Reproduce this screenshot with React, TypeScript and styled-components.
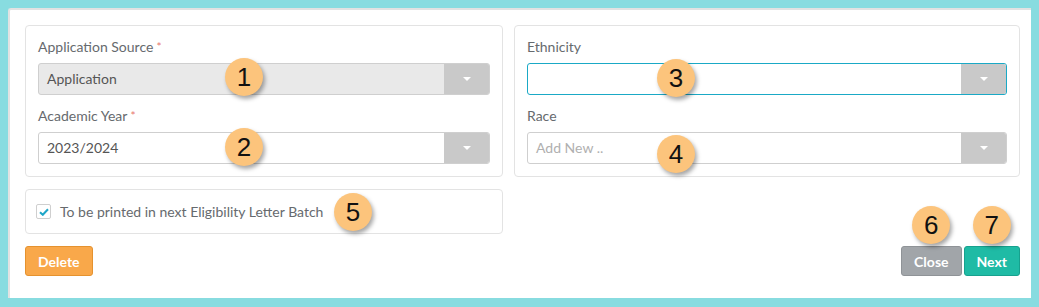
import React from 'react';
import styled, { createGlobalStyle } from 'styled-components';

const GlobalStyle = createGlobalStyle`
  * { box-sizing: border-box; }
  body {
    margin: 0;
    background: #88dce0;
    font-family: Lato, "Open Sans", Arial, sans-serif;
  }
`;

const Frame = styled.div`
  width: 1039px;
  height: 307px;
  padding: 8px 8px 9px 8px;
`;

const Panel = styled.div`
  height: 290px;
  background: #fff;
  border-top: 2px solid #e2e2e2;
  border-left: 2px solid #e2e2e2;
  border-top-left-radius: 3px;
  padding: 15px 11px 0 15px;
  display: flex;
  flex-direction: column;
`;

const TopRow = styled.div`
  display: grid;
  grid-template-columns: 478px 506px;
  column-gap: 11px;
`;

const Box = styled.div`
  border: 1px solid #e3e3e3;
  border-radius: 4px;
  padding: 12px;
  display: flex;
  flex-direction: column;
`;

const Field = styled.div<{ $last?: boolean }>`
  display: flex;
  flex-direction: column;
  margin-bottom: ${p => (p.$last ? '0' : '12px')};
`;

const Label = styled.label`
  height: 18px;
  line-height: 18px;
  margin-bottom: 7px;
  font-size: 14px;
  color: #666a6e;
`;

const Required = styled.span`
  color: #e8766e;
  font-size: 12px;
  margin-left: 3px;
  vertical-align: top;
`;

const SelectBox = styled.div<{ $disabled?: boolean; $focused?: boolean }>`
  position: relative;
  height: 32px;
  display: flex;
  border: 1px solid ${p => (p.$focused ? '#1aa9c6' : '#cfcfcf')};
  border-radius: 3px;
  background: ${p => (p.$disabled ? '#e9e9e9' : '#fff')};
`;

const SelectValue = styled.div<{ $placeholder?: boolean }>`
  flex: 1;
  padding-left: 8px;
  line-height: 30px;
  font-size: 14px;
  color: ${p => (p.$placeholder ? '#b0b0b0' : '#555')};
`;

const DropButton = styled.div`
  width: 45px;
  background: #c9c9c9;
  border-radius: 0 2px 2px 0;
  display: flex;
  align-items: center;
  justify-content: center;
`;

const Caret = styled.span`
  width: 0;
  height: 0;
  border-left: 4px solid transparent;
  border-right: 4px solid transparent;
  border-top: 4px solid #fff;
`;

const Marker = styled.div<{ $left?: number; $top?: number }>`
  position: absolute;
  left: ${p => p.$left ?? 0}px;
  top: ${p => p.$top ?? 0}px;
  width: 38px;
  height: 38px;
  border-radius: 50%;
  background: #fcc47c;
  box-shadow: 2px 3px 4px rgba(0, 0, 0, 0.35);
  display: flex;
  align-items: center;
  justify-content: center;
  font-family: "Liberation Sans", Arial, sans-serif;
  font-weight: 400;
  font-size: 26px;
  color: #111;
  z-index: 2;
`;

const ButtonMarker = styled(Marker)`
  left: 50%;
  top: auto;
  bottom: calc(100% + 3px);
  transform: translateX(-50%);
`;

const CheckRow = styled.div`
  position: relative;
  width: 478px;
  height: 45px;
  margin-top: 12px;
  border: 1px solid #e3e3e3;
  border-radius: 4px;
  padding-left: 10px;
  display: flex;
  align-items: center;
  gap: 9px;
`;

const CheckBox = styled.span`
  width: 15px;
  height: 15px;
  border: 1px solid #cfcfcf;
  border-radius: 2px;
  display: flex;
  align-items: center;
  justify-content: center;
`;

const CheckText = styled.span`
  font-size: 14px;
  color: #666a6e;
`;

const ButtonRow = styled.div`
  display: flex;
  align-items: center;
  margin-top: 12px;
`;

const Spacer = styled.div`
  flex: 1;
`;

const Button = styled.button<{ $bg: string; $border: string }>`
  position: relative;
  height: 30px;
  padding: 0 12px;
  background: ${p => p.$bg};
  border: 1px solid ${p => p.$border};
  border-radius: 3px;
  color: #fff;
  font-family: Lato, Arial, sans-serif;
  font-weight: 700;
  font-size: 14px;
  & + & {
    margin-left: 2px;
  }
`;

type SelectProps = {
  value?: string;
  placeholder?: string;
  disabled?: boolean;
  focused?: boolean;
  marker: number;
  markerLeft: number;
  markerTop: number;
};

const Select: React.FC<SelectProps> = ({ value, placeholder, disabled, focused, marker, markerLeft, markerTop }) => (
  <SelectBox $disabled={disabled} $focused={focused}>
    <SelectValue $placeholder={!value}>{value || placeholder}</SelectValue>
    <DropButton>
      <Caret />
    </DropButton>
    <Marker $left={markerLeft} $top={markerTop}>{marker}</Marker>
  </SelectBox>
);

export default function App() {
  return (
    <>
      <GlobalStyle />
      <Frame>
        <Panel>
          <TopRow>
            <Box>
              <Field>
                <Label>Application Source<Required>*</Required></Label>
                <Select value="Application" disabled marker={1} markerLeft={186} markerTop={-6} />
              </Field>
              <Field $last>
                <Label>Academic Year<Required>*</Required></Label>
                <Select value="2023/2024" marker={2} markerLeft={186} markerTop={-5} />
              </Field>
            </Box>
            <Box>
              <Field>
                <Label>Ethnicity</Label>
                <Select focused marker={3} markerLeft={129} markerTop={-5} />
              </Field>
              <Field $last>
                <Label>Race</Label>
                <Select placeholder="Add New .." marker={4} markerLeft={129} markerTop={2} />
              </Field>
            </Box>
          </TopRow>

          <CheckRow>
            <CheckBox>
              <svg width="10" height="8" viewBox="0 0 10 8">
                <path d="M1 4.2 L3.8 6.8 L9 1.2" fill="none" stroke="#1ea6c8" strokeWidth="2" />
              </svg>
            </CheckBox>
            <CheckText>To be printed in next Eligibility Letter Batch</CheckText>
            <Marker $left={308} $top={3}>5</Marker>
          </CheckRow>

          <ButtonRow>
            <Button $bg="#f9a84a" $border="#e5922f">Delete</Button>
            <Spacer />
            <Button $bg="#a1a5a9" $border="#8f9397">
              Close
              <ButtonMarker>6</ButtonMarker>
            </Button>
            <Button $bg="#1fbba5" $border="#17a18e">
              Next
              <ButtonMarker>7</ButtonMarker>
            </Button>
          </ButtonRow>
        </Panel>
      </Frame>
    </>
  );
}
